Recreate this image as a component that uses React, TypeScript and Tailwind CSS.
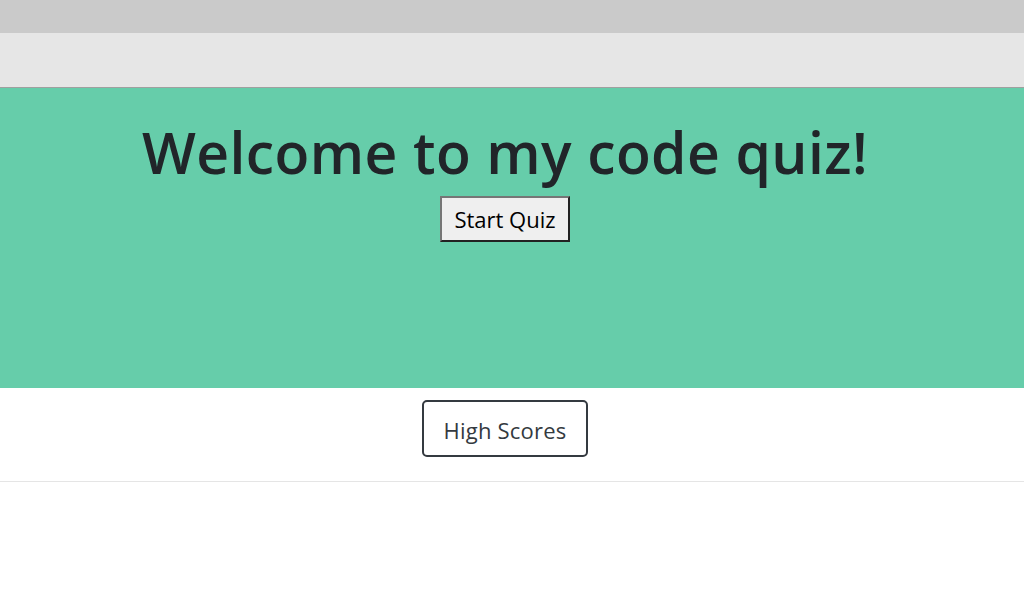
export default function App() {
  return (
    <div className="min-h-screen bg-white" style={{ fontFamily: '"Open Sans", "Noto Sans", sans-serif' }}>
      <div className="h-[33px] bg-[#cacaca]" />
      <div className="h-[55px] bg-[#e6e6e6] border-b border-[#a0a0a0]" />

      <section className="h-[300px] bg-[#66cdaa]">
        <div className="w-[1010px] flex flex-col items-center">
          <h1 className="mt-[24px] text-[57px] leading-[80px] font-semibold tracking-[0.4px] text-[#212529]">
            Welcome to my code quiz!
          </h1>
          <button className="mt-[4px] h-[46px] px-[12px] text-[22px] text-black bg-[#efefef] border-2 border-t-[#767676] border-l-[#767676] border-b-[#222] border-r-[#222]">
            Start Quiz
          </button>
        </div>
      </section>

      <div className="border-b border-[#e5e5e5]">
        <div className="w-[1010px] flex justify-center pt-[12px] pb-[24px]">
          <button className="h-[57px] w-[166px] pt-[3px] rounded-[5px] border-2 border-[#343a40] text-[22px] tracking-[0.2px] text-[#343a40]">
            High Scores
          </button>
        </div>
      </div>
    </div>
  )
}
